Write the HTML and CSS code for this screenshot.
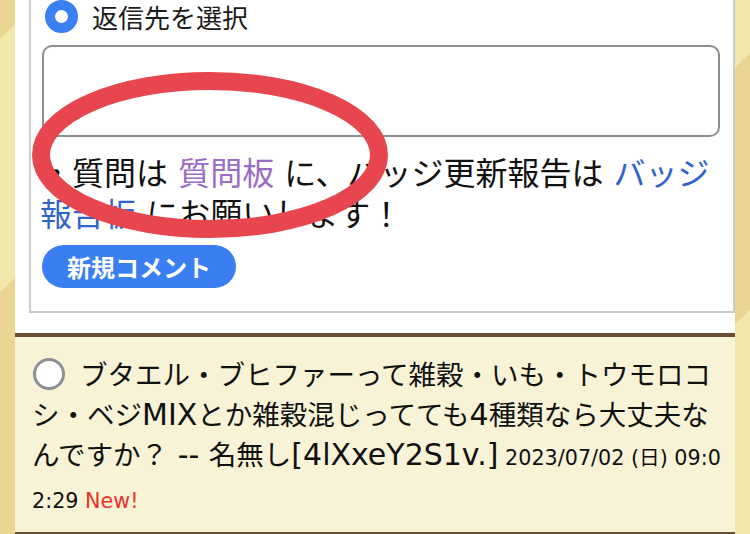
FILE: index.html
```html
<!DOCTYPE html>
<html lang="ja">
<head>
<meta charset="utf-8">
<link rel="stylesheet" href="styles.css">
</head>
<body>
<div class="page">
  <div class="panel">
    <div class="form-box">
      <label class="reply-row"><span class="radio radio-on"></span><span class="reply-label">返信先を選択</span></label>
      <div class="textarea"></div>
      <p class="notice">・質問は <a class="visited">質問板</a> に、バッジ更新報告は <a class="link">バッジ報告板</a> にお願いします！</p>
      <button class="new-btn">新規コメント</button>
    </div>
  </div>
  <div class="comment">
    <p class="comment-text"><span class="radio radio-off"></span>ブタエル・ブヒファーって雑穀・いも・トウモロコシ・ベジ<span class="latin">MIX</span>とか雑穀混じってても<span class="latin">4</span>種類なら大丈夫なんですか？<span class="latin"> -- </span>名無し<span class="latin">[4lXxeY2S1v.]</span><span class="date"> 2023/07/02 (日) 09:02:29</span><span class="new"> New!</span></p>
  </div>
  <div class="after"></div>
</div>
<svg class="annotation" width="750" height="534" viewBox="0 0 750 534">
  <ellipse cx="210" cy="155" rx="169" ry="74" fill="none" stroke="#e8464e" stroke-width="18"/>
</svg>
</body>
</html>
```

FILE: styles.css
```css
html, body {
  margin: 0;
  padding: 0;
}
body {
  width: 750px;
  height: 534px;
  overflow: hidden;
  position: relative;
  background: repeating-linear-gradient(135deg, #ebd593 0 28px, #f3e8ac 28px 207px, #ebd593 207px 360.6px);
  font-family: "Noto Sans CJK JP", "Noto Sans", sans-serif;
  color: #111;
}
.page {
  margin: 0 15px;
  width: 720px;
}
.panel {
  background: #fff;
  padding: 0 0 20px 14px;
}
.form-box {
  border: 2px solid #cbcbcb;
  border-top: none;
  padding: 0 13px 23px 11px;
}
.reply-row {
  display: flex;
  align-items: center;
  gap: 14px;
  height: 33px;
  font-size: 26px;
  color: #1a1a1a;
}
.radio {
  display: inline-block;
  box-sizing: border-box;
  border-radius: 50%;
}
.radio-on {
  width: 33px;
  height: 33px;
  margin-left: 3px;
  border: 10px solid #3a80f2;
  background: #fff;
}
.textarea {
  margin-top: 12px;
  height: 92px;
  box-sizing: border-box;
  border: 2px solid #8e8e92;
  border-radius: 10px;
  background: #fff;
}
.notice {
  margin: 14px 0 0 -2px;
  font-size: 32px;
  line-height: 41px;
  word-spacing: 3px;
  color: #111;
}
.visited {
  color: #9a6cc6;
}
.link {
  color: #2f63cc;
}
.new-btn {
  display: block;
  margin-top: 12px;
  height: 43px;
  padding: 0 25px;
  border: none;
  border-radius: 22px;
  background: #397ff1;
  color: #fff;
  font-family: "Noto Sans CJK JP", sans-serif;
  font-size: 24px;
  font-weight: 700;
  line-height: 43px;
}
.comment {
  background: #f8f3d6;
  border-top: 4px solid #6a4f36;
  border-bottom: 4px solid #6a4f36;
  padding: 18px 8px 11px 17px;
}
.comment-text {
  margin: 0;
  font-family: "DejaVu Sans", "Noto Sans CJK JP", sans-serif;
  font-size: 27.5px;
  line-height: 40px;
  word-break: break-all;
  color: #111;
}
.latin {
  font-size: 30px;
}
.radio-off {
  width: 32px;
  height: 32px;
  margin: 0 15px 0 1px;
  border: 3px solid #8e8e93;
  background: #fff;
  vertical-align: -5px;
}
.date {
  font-size: 20.7px;
}
.new {
  font-size: 20.7px;
  color: #e8322a;
}
.after {
  height: 20px;
  background: #fff;
}
.annotation {
  position: absolute;
  left: 0;
  top: 0;
  pointer-events: none;
}
```
